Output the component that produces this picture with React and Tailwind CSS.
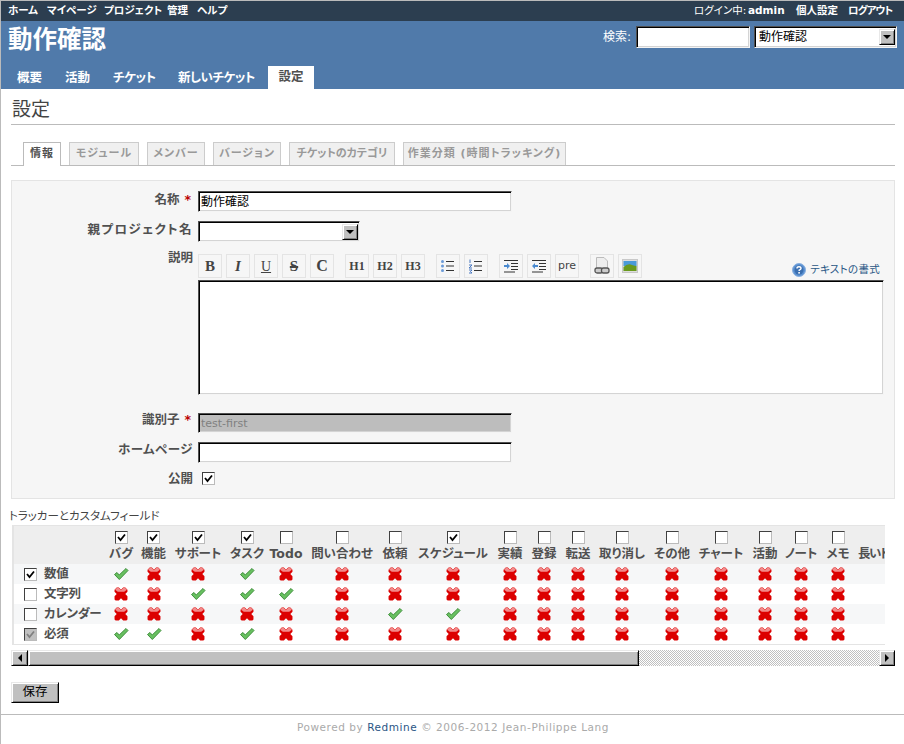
import React from 'react';

const font = 'font-["DejaVu_Sans","Noto_Sans_CJK_JP",sans-serif] [font-feature-settings:"palt"]';
const cols = 'grid grid-cols-[91px_32px_33px_56px_42px_36px_76px_30px_86px_28px_40px_28px_60px_40px_58px_30px_42px_32px_60px]';
const inset = 'border border-t-[#505050] border-l-[#505050] border-r-[#f4f4f4] border-b-[#f4f4f4] shadow-[inset_1px_1px_0_#000,inset_-1px_-1px_0_#d4d4d4]';
const bevel = 'border border-t-[#e8e8e8] border-l-[#e8e8e8] border-r-[#000] border-b-[#000] shadow-[inset_1px_1px_0_#fff,inset_-1px_-1px_0_#808080]';
const subTab = 'h-[23px] bg-[#f0f0f0] text-[#999] border border-b-0 border-[#ccc] flex items-center justify-center';

const trackers = [
    ['バグ', true], ['機能', true], ['サポート', true], ['タスク', true], ['Todo', false], ['問い合わせ', false],
    ['依頼', false], ['スケジュール', true], ['実績', false], ['登録', false], ['転送', false], ['取り消し', false],
    ['その他', false], ['チャート', false], ['活動', false], ['ノート', false], ['メモ', false],
];

const rows = [
    { name: '数値', checked: true, on: [0, 3] },
    { name: '文字列', checked: false, on: [2, 3, 4] },
    { name: 'カレンダー', checked: false, on: [6, 7] },
    { name: '必須', checked: true, disabled: true, on: [0, 1, 3] },
];

const toolbar = [
    { label: 'B', className: 'font-["Liberation_Serif"] font-bold text-[15px]' },
    { label: 'I', className: 'font-["Liberation_Serif"] font-bold italic text-[15px]' },
    { label: 'U', className: 'font-["Liberation_Serif"] underline text-[14px]' },
    { label: 'S', className: 'font-["Liberation_Serif"] font-bold line-through decoration-[1.5px] text-[15px]' },
    { label: 'C', className: 'font-["Liberation_Serif"] font-bold text-[16px]' },
    { label: 'H1', gap: true, className: 'font-["Liberation_Serif"] font-bold text-[12px]' },
    { label: 'H2', className: 'font-["Liberation_Serif"] font-bold text-[12px]' },
    { label: 'H3', className: 'font-["Liberation_Serif"] font-bold text-[12px]' },
    { icon: 'ul', gap: true },
    { icon: 'ol' },
    { icon: 'indent', gap: true },
    { icon: 'outdent' },
    { label: 'pre', className: 'font-["DejaVu_Sans"] text-[11px]' },
    { icon: 'link', gap: true },
    { icon: 'image' },
];

function Check() {
    return (
        <svg width="16" height="16" viewBox="0 0 16 16">
            <path d="M1.5 8.5 L4 6.5 L6.2 9 L13 2.5 L15 4.5 L6.3 13.5 Z" fill="#68c060" stroke="#3f8f3c" strokeWidth="1" strokeLinejoin="round" />
        </svg>
    );
}

function Cross() {
    return (
        <svg width="14" height="14" viewBox="1.5 1.5 13 13">
            <path d="M2 4 L4 2 H6 L8 4 L10 2 H12 L14 4 V6 L12 8 L14 10 V13 L13 14 H10 L8 12 L6 14 H3 L2 13 V10 L4 8 L2 6 Z" fill="#dc0000" />
            <path d="M2.5 4 L4 2.5 H6 L8 4.5 L10 2.5 H12 L13.5 4 L11 6 H5 Z" fill="#f28a8a" />
        </svg>
    );
}

function Box({ checked, disabled }) {
    return (
        <span className={`flex shrink-0 w-[13px] h-[13px] items-center justify-center border border-t-[#404040] border-l-[#404040] border-r-[#bbb] border-b-[#bbb] ${disabled ? 'bg-[#c0c0c0]' : 'bg-white'}`}>
            {checked && (
                <svg width="9" height="9" viewBox="0 0 9 9">
                    <path d="M1 4 L3.5 7 L8 1.5" fill="none" stroke={disabled ? '#808080' : '#000'} strokeWidth="1.8" />
                </svg>
            )}
        </span>
    );
}

function ToolIcon({ name }) {
    if (name === 'ul' || name === 'ol') {
        const dot = name === 'ul' ? '#6a9ad8' : '#4a78c0';
        return (
            <svg width="16" height="16" viewBox="0 0 16 16">
                <path d="M6 3.5 H14 M6 8 H14 M6 12.5 H14" stroke="#333" strokeWidth="1" />
                {name === 'ul'
                    ? [3.5, 8, 12.5].map((y) => <circle key={y} cx="2.5" cy={y} r="1.5" fill={dot} />)
                    : <path d="M2 1.5 V5 M1 7 H4 L1 10 H4 M1 12 H4 L2.5 13.5 L4 15 H1" fill="none" stroke={dot} strokeWidth="1" />}
            </svg>
        );
    }
    if (name === 'indent' || name === 'outdent') {
        return (
            <svg width="16" height="16" viewBox="0 0 16 16">
                <path d="M1 2.5 H15 M8 5.5 H15 M8 8.5 H15 M8 11.5 H15 M1 14 H12" stroke="#333" strokeWidth="1" />
                <path d={name === 'indent' ? 'M1 7 H4 V5 L7 8 L4 11 V9 H1 Z' : 'M7 7 H4 V5 L1 8 L4 11 V9 H7 Z'} fill="#4a8ad0" />
            </svg>
        );
    }
    if (name === 'link') {
        return (
            <svg width="16" height="18" viewBox="0 0 16 18">
                <path d="M2.5 0.5 H10 L13.5 4 V15.5 H2.5 Z" fill="#eeeeee" stroke="#bbbbbb" />
                <rect x="1" y="11" width="7.5" height="5" rx="2" fill="#ccc" stroke="#555" strokeWidth="1.3" />
                <rect x="7.5" y="11" width="7.5" height="5" rx="2" fill="#ccc" stroke="#555" strokeWidth="1.3" />
            </svg>
        );
    }
    return (
        <svg width="16" height="14" viewBox="0 0 16 14">
            <rect x="0.5" y="0.5" width="15" height="13" fill="#ddd" stroke="#c8c8c8" />
            <rect x="1.5" y="2" width="13" height="5" fill="#4a9ad8" />
            <path d="M1.5 12 V8 Q6 4 10 6 Q13 7 14.5 7 V12 Z" fill="#6a9a1c" />
        </svg>
    );
}

function FormRow({ label, required, className, labelClass = '', children }) {
    return (
        <div className={`flex ${className}`}>
            <div className={`w-[183px] h-[18px] shrink-0 text-right text-[12.5px] font-bold text-[#505050] leading-[18px] whitespace-nowrap ${required ? 'pr-[4px]' : 'pr-[2px]'} ${labelClass}`}>
                {label}
                {required && <span className="text-[#bb0000] ml-[5px]">*</span>}
            </div>
            <div className="ml-[3px] flex-1">{children}</div>
        </div>
    );
}

function SelectBox({ className, text }) {
    return (
        <div className={`${inset} bg-white flex items-center justify-between ${className}`}>
            <span className="pl-[4px] text-[12px] text-black">{text}</span>
            <span className={`w-[16px] h-[16px] mr-[1px] bg-[#c0c0c0] ${bevel} flex items-center justify-center`}>
                <span className="w-0 h-0 border-x-[4px] border-x-transparent border-t-[4px] border-t-black" />
            </span>
        </div>
    );
}

export default function App() {
    return (
        <div className={`w-[904px] h-[744px] overflow-hidden bg-white border-l border-t border-[#bbb] ${font}`}>
            <div className="h-[20px] bg-[#2c3e50] flex items-center justify-between text-[10.5px] font-bold text-white">
                <div className="flex">
                    <span className="ml-[7px] w-[39px]">ホーム</span>
                    <span className="w-[57px]">マイページ</span>
                    <span className="w-[63px]">プロジェクト</span>
                    <span className="w-[30px]">管理</span>
                    <span>ヘルプ</span>
                </div>
                <div className="flex mr-[10px] whitespace-nowrap">
                    <span className="font-normal w-[54px]">ログイン中:</span>
                    <span className="w-[48px]">admin</span>
                    <span className="w-[52px]">個人設定</span>
                    <span className="w-[46px] tracking-[-1px]">ログアウト</span>
                </div>
            </div>

            <div className="h-[68px] bg-[#507aaa] flex flex-col justify-between">
                <div className="flex justify-between items-start">
                    <div className="ml-[7px] mt-[4px] text-[24.5px] leading-[30px] font-bold text-white">動作確認</div>
                    <div className="flex items-center mt-[5px] mr-[7px]">
                        <span className="text-[12px] text-white mr-[5px]">検索:</span>
                        <div className={`${inset} bg-white w-[114px] h-[22px] mr-[4px]`} />
                        <SelectBox className="w-[143px] h-[22px]" text="動作確認" />
                    </div>
                </div>
                <div className="flex items-end text-[12.5px] font-bold text-white h-[23px] whitespace-nowrap">
                    <span className="ml-[16px] w-[48px] pb-[1px]">概要</span>
                    <span className="w-[48px] pb-[1px]">活動</span>
                    <span className="w-[65px] pb-[1px] tracking-[-0.5px]">チケット</span>
                    <span className="w-[90px] pb-[1px] tracking-[-0.5px]">新しいチケット</span>
                    <span className="w-[46px] h-[23px] bg-white text-[#505050] flex items-center justify-center">設定</span>
                </div>
            </div>

            <div className="pl-[10px] pr-[9px]">
                <div className="h-[36px] border-b border-[#bbb] text-[19px] text-[#444] leading-[40px] pl-[1px]">設定</div>

                <div className="pt-[17px] border-b border-[#bbb] h-[41px] pl-[12px] flex gap-[8px] text-[11px] font-bold tracking-[1px] whitespace-nowrap">
                    <span className="w-[38px] h-[24px] bg-white text-[#505050] border border-b-0 border-[#bbb] flex items-center justify-center">情報</span>
                    <span className={`w-[70px] ${subTab}`}>モジュール</span>
                    <span className={`w-[58px] ${subTab}`}>メンバー</span>
                    <span className={`w-[68px] ${subTab}`}>バージョン</span>
                    <span className={`w-[106px] ${subTab} tracking-[0px]`}>チケットのカテゴリ</span>
                    <span className={`w-[163px] ${subTab}`}>作業分類 (時間トラッキング)</span>
                </div>

                <div className="mt-[14px] h-[319px] border border-[#e4e4e4] bg-[#f6f6f6]">
                    <FormRow label="名称" required className="mt-[10px]">
                        <div className={`${inset} bg-white w-[314px] h-[21px] pl-[2px] text-[12px] leading-[21px] text-black`}>動作確認</div>
                    </FormRow>
                    <FormRow label="親プロジェクト名" className="mt-[9px]" labelClass="tracking-[1.4px]">
                        <SelectBox className="w-[162px] h-[21px]" />
                    </FormRow>
                    <FormRow label="説明" className="mt-[12px]" labelClass="-mt-[5px]">
                        <div className="flex items-end justify-between w-[686px] h-[24px]">
                            <div className="flex gap-[4px]">
                                {toolbar.map((b, i) => (
                                    <span key={i} className={`w-[24px] h-[24px] border border-[#e4e4e4] flex items-center justify-center text-[#444] ${b.gap ? 'ml-[7px]' : ''} ${b.className || ''}`}>
                                        {b.icon ? <ToolIcon name={b.icon} /> : b.label}
                                    </span>
                                ))}
                            </div>
                            <div className="flex items-center gap-[4px] mr-[4px] text-[10.5px] text-[#2a5685]">
                                <svg width="14" height="14" viewBox="0 0 14 14">
                                    <circle cx="7" cy="7" r="6.5" fill="#5a90d0" stroke="#8ab0e0" />
                                    <circle cx="7" cy="7" r="4.5" fill="#3a6eb0" />
                                    <path d="M5 5.5 Q5 3.8 7 3.8 Q9 3.8 9 5.4 Q9 6.4 7.2 7.2 V8" fill="none" stroke="#fff" strokeWidth="1.4" />
                                    <rect x="6.3" y="9" width="1.6" height="1.6" fill="#fff" />
                                </svg>
                                <span className="tracking-[0.3px]">テキストの書式</span>
                            </div>
                        </div>
                        <div className={`${inset} bg-white w-[686px] h-[115px] mt-[2px]`} />
                    </FormRow>
                    <FormRow label="識別子" required className="mt-[18px]" labelClass="-mt-[2px]">
                        <div className={`${inset} bg-[#bdbdbd] w-[314px] h-[20px] pl-[2px] text-[11px] leading-[20px] text-[#808080]`}>test-first</div>
                    </FormRow>
                    <FormRow label="ホームページ" className="mt-[9px]" labelClass="-mt-[1px] tracking-[0.5px]">
                        <div className={`${inset} bg-white w-[314px] h-[21px]`} />
                    </FormRow>
                    <FormRow label="公開" className="mt-[9px]" labelClass="-mt-[2px]">
                        <div className="pl-[4px]"><Box checked /></div>
                    </FormRow>
                </div>

                <div className="mt-[10px] h-[16px] -ml-[2px] text-[11.5px] leading-[14px] text-[#444]">トラッカーとカスタムフィールド</div>

                <div className="ml-[1px] w-[873px] overflow-hidden border-l-2 border-t border-b border-[#e4e4e4]">
                    <div className={`${cols} w-[1000px] h-[38px] bg-[#eeeeee] text-[12.5px] font-bold text-[#505050]`}>
                        <div />
                        {trackers.map(([name, checked]) => (
                            <div key={name} className="flex flex-col items-center pt-[5px] leading-none">
                                <Box checked={checked} />
                                <span className="mt-[4px] whitespace-nowrap">{name}</span>
                            </div>
                        ))}
                        <div className="pt-[22px] leading-none whitespace-nowrap pl-[4px] tracking-[-1.5px]">長いトラッカー</div>
                    </div>
                    {rows.map((row, r) => (
                        <div key={row.name} className={`${cols} w-[1000px] h-[20px] ${r % 2 === 0 ? 'bg-[#f6f7f8]' : 'bg-white'}`}>
                            <div className="flex items-center pl-[10px] gap-[7px] text-[12.5px] font-bold text-[#505050] whitespace-nowrap tracking-[-0.3px]">
                                <Box checked={row.checked} disabled={row.disabled} />
                                <span>{row.name}</span>
                            </div>
                            {trackers.map(([name], i) => (
                                <div key={name} className="flex items-center justify-center">
                                    {row.on.includes(i) ? <Check /> : <Cross />}
                                </div>
                            ))}
                            <div />
                        </div>
                    ))}
                </div>

                <div className="mt-[5px] flex h-[16px] w-[884px]">
                    <span className={`w-[17px] h-[16px] bg-[#c0c0c0] ${bevel} flex items-center justify-center`}>
                        <span className="w-0 h-0 border-y-[4px] border-y-transparent border-r-[4px] border-r-black" />
                    </span>
                    <span className={`w-[611px] h-[16px] bg-[#c0c0c0] ${bevel}`} />
                    <span className="flex-1 bg-[repeating-conic-gradient(#c0c0c0_0_25%,#fff_0_50%)] bg-[length:2px_2px]" />
                    <span className={`w-[16px] h-[16px] bg-[#c0c0c0] ${bevel} flex items-center justify-center`}>
                        <span className="w-0 h-0 border-y-[4px] border-y-transparent border-l-[4px] border-l-black" />
                    </span>
                </div>

                <div className={`mt-[16px] w-[48px] h-[21px] bg-[#c0c0c0] ${bevel} flex items-center justify-center text-[12.5px] text-black`}>保存</div>
            </div>

            <div className="mt-[11px] border-t border-[#bbb] pt-[5px] pl-[1px] text-center text-[10.5px] tracking-[0.55px] text-[#aaa]">
                Powered by <span className="text-[#2a5685]">Redmine</span> © 2006-2012 Jean-Philippe Lang
            </div>
        </div>
    );
}
